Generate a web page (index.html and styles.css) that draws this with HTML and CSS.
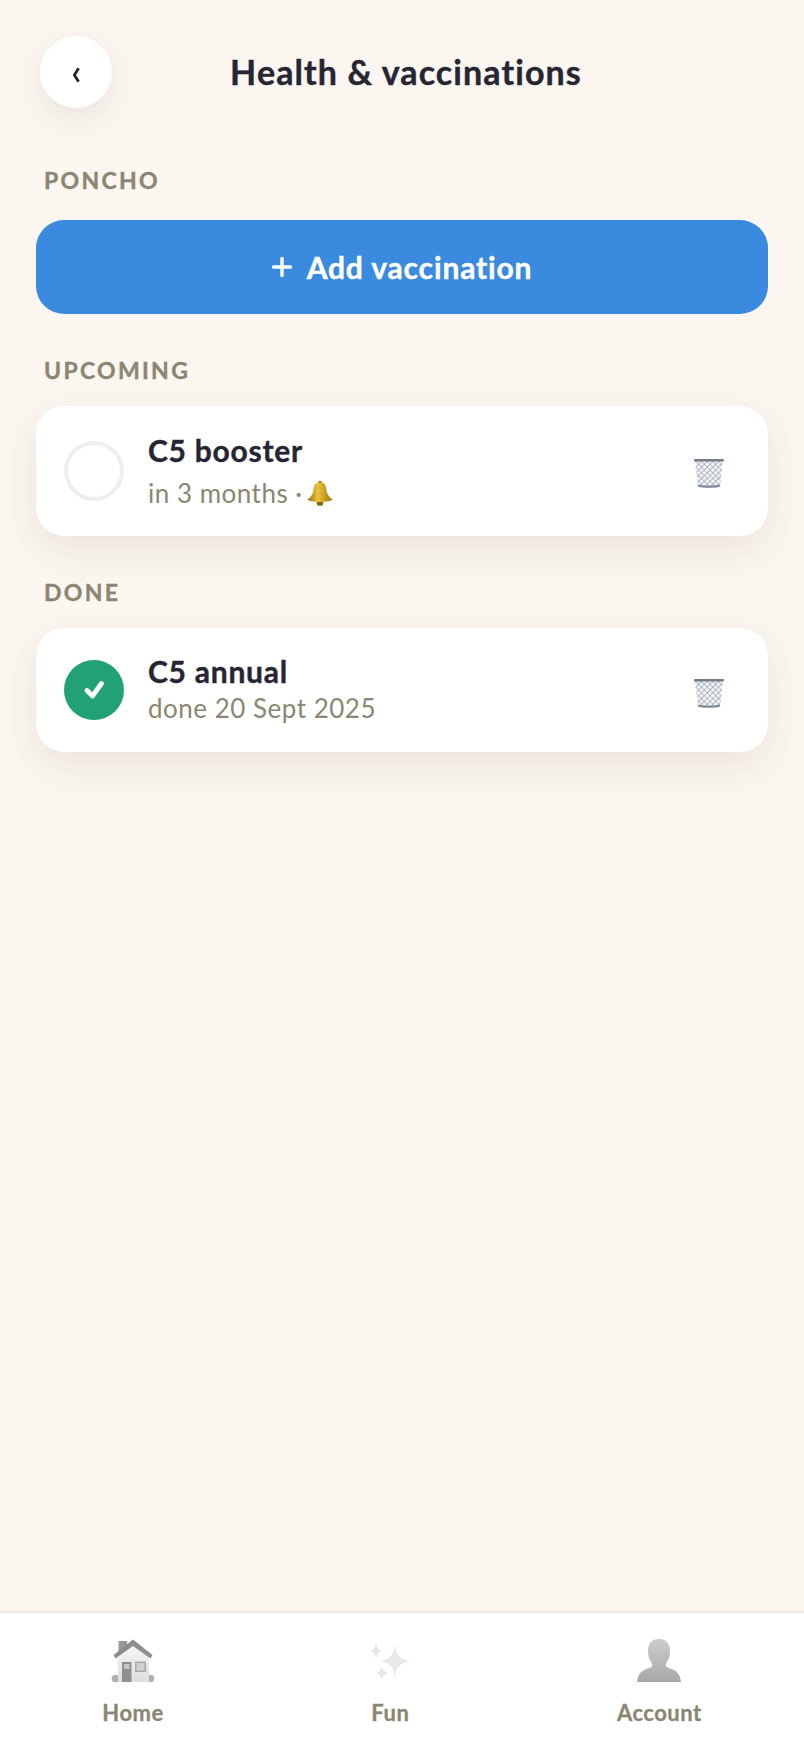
FILE: index.html
```html
<!DOCTYPE html>
<html lang="en">
<head>
<meta charset="utf-8">
<title>Health &amp; vaccinations</title>
<link rel="stylesheet" href="styles.css">
</head>
<body>
<div class="screen">
  <main class="content">
    <header class="header">
      <button class="back" aria-label="Back">
        <svg width="12" height="18" viewBox="0 0 12 18"><path d="M8.600 2.200 4.400 9l4.200 6.800" fill="none" stroke="#262633" stroke-width="2.800"/></svg>
      </button>
      <h1 class="title">Health &amp; vaccinations</h1>
    </header>
    <div class="label label-pet">PONCHO</div>
    <button class="add">
      <svg width="20" height="20" viewBox="0 0 20 20"><path d="M10 1.500v17M1.500 10h17" stroke="#fff" stroke-width="3.400" stroke-linecap="round"/></svg>
      <span>Add vaccination</span>
    </button>
    <div class="label label-up">UPCOMING</div>
    <section class="card card-up">
      <span class="circle"></span>
      <div class="info">
        <div class="name">C5 booster</div>
        <div class="sub sub-up">in 3 months · <svg class="bell" width="26" height="26" viewBox="0 0 28 28"><defs><linearGradient id="b" x1="0" x2="1"><stop offset="0" stop-color="#96690c"/><stop offset=".4" stop-color="#eec23a"/><stop offset="1" stop-color="#a5760c"/></linearGradient></defs><circle cx="14" cy="3" r="2.200" fill="#a5760c"/><ellipse cx="14" cy="25" rx="3.500" ry="2.800" fill="#8f630c"/><path d="M14 2.500c5 0 6.500 3.500 7 8.500 .5 4 3 7.500 6.500 10 0 1-6.500 2.800-13.500 2.800S.5 22 .5 21C4 18.500 6.500 15 7 11c.5-5 2-8.500 7-8.500z" fill="url(#b)"/></svg></div>
      </div>
      <svg class="trash" width="32" height="30" viewBox="0 0 32 30"><defs><pattern id="m" width="4" height="4" patternUnits="userSpaceOnUse" patternTransform="rotate(45)"><rect width="4" height="4" fill="#f2f4f6"/><path d="M0 0H4M0 0V4" stroke="#8a94a1" stroke-width="1.200"/></pattern></defs><path d="M2 3h28l-3 25.500c-3 1.500-19 1.500-22 0z" fill="url(#m)"/><rect x="1" y="1" width="30" height="2.600" rx="1" fill="#777d86"/><path d="M5 27.500c4 1.500 18 1.500 22 0" stroke="#7f8a98" stroke-width="2" fill="none"/></svg>
    </section>
    <div class="label label-done">DONE</div>
    <section class="card card-done">
      <span class="circle done">
        <svg width="24" height="22" viewBox="0 0 24 22"><path d="M5 11.500 10.500 17 19.500 4.500" fill="none" stroke="#fff" stroke-width="4.800" stroke-linecap="round" stroke-linejoin="round"/></svg>
      </span>
      <div class="info info-done">
        <div class="name">C5 annual</div>
        <div class="sub">done 20 Sept 2025</div>
      </div>
      <svg class="trash trash-done" width="32" height="30" viewBox="0 0 32 30"><path d="M2 3h28l-3 25.500c-3 1.500-19 1.500-22 0z" fill="url(#m)"/><rect x="1" y="1" width="30" height="2.600" rx="1" fill="#777d86"/><path d="M5 27.500c4 1.500 18 1.500 22 0" stroke="#7f8a98" stroke-width="2" fill="none"/></svg>
    </section>
  </main>
  <nav class="tabs">
    <div class="tab">
      <svg class="tab-icon" width="44" height="44" viewBox="0 0 44 44"><defs><linearGradient id="w" x1="0" x2="0" y1="0" y2="1"><stop offset="0" stop-color="#f6f6f6"/><stop offset="1" stop-color="#dedede"/></linearGradient></defs><rect x="7.500" y="2" width="8.500" height="13" fill="#999999"/><ellipse cx="4.500" cy="39.500" rx="3.800" ry="3.800" fill="#b0b0b0"/><ellipse cx="39.500" cy="39.500" rx="3.800" ry="3.800" fill="#b0b0b0"/><path d="M22 5 38 18v25H7V18z" fill="url(#w)"/><path d="M22 .5 41.500 16l-2 3.500L22 7 4.500 19.500l-2-3.500z" fill="#8e8e8e"/><rect x="11" y="23" width="9.500" height="20" fill="#8f8f8f"/><rect x="13" y="25" width="5.500" height="5" fill="#c5c5c5"/><rect x="24" y="22.500" width="11" height="10.500" fill="#a8a8a8"/><rect x="25.500" y="24" width="8" height="7.500" fill="#d0d0d0"/></svg>
      <span class="tab-label">Home</span>
    </div>
    <div class="tab">
      <svg class="tab-icon" width="44" height="44" viewBox="0 0 44 44"><path d="M27 4c.8 11 3 15.500 15 18-12 2.500-14.200 7-15 19-.8-12-3-16.500-15-19 12-2.500 14.200-7 15-18z" fill="#e9e9e9"/><path d="M8 3c.5 6 1.800 8 6.500 9C9.800 13 8.500 15 8 21c-.5-6-1.800-8-6.500-9C6.200 11 7.500 9 8 3z" fill="#e6e6e6"/><path d="M14 26c.5 5 1.800 7 6.500 8-4.700 1-6 3-6.500 8-.5-5-1.800-7-6.500-8 4.700-1 6-3 6.500-8z" fill="#e6e6e6"/></svg>
      <span class="tab-label">Fun</span>
    </div>
    <div class="tab">
      <svg class="tab-icon" width="44" height="44" viewBox="0 0 44 44"><defs><linearGradient id="p" x1="0" x2="0" y1="0" y2="1"><stop offset="0" stop-color="#cccccc"/><stop offset="1" stop-color="#a8a8a8"/></linearGradient></defs><path d="M22 0c7.500 0 11 4.500 11 12.500 0 5-2 9.500-4 12-1 2 0 3.500 3 4.500 6 2 11 4 12 14H0c1-10 6-12 12-14 3-1 4-2.500 3-4.500-2-2.500-4-7-4-12C11 4.500 14.500 0 22 0z" fill="url(#p)"/></svg>
      <span class="tab-label">Account</span>
    </div>
  </nav>
</div>
</body>
</html>
```
FILE: styles.css
```css
* { box-sizing: border-box; }
html, body { margin: 0; padding: 0; height: 100%; }
body { background: #fbf6f0; font-family: "Lato", "Noto Sans", sans-serif; color: #262633; }
.screen { width: 804px; height: 1748px; display: flex; flex-direction: column; }
.content { flex: 1; padding: 36px 36px 0; }
.header { display: flex; align-items: center; height: 72px; padding: 0 68px 0 4px; }
.back { width: 72px; height: 72px; border: 0; border-radius: 50%; background: #fff; padding: 5px 0 0; display: flex; align-items: center; justify-content: center; box-shadow: 0 10px 32px rgba(80, 60, 40, .09); }
.title { flex: 1; margin: 0; text-align: center; font-size: 34px; font-weight: 700; line-height: 44px; letter-spacing: 1.1px; -webkit-text-stroke: .4px #262633; }
.label { font-size: 23px; font-weight: 700; letter-spacing: 2.3px; color: #8b8672; line-height: 28px; padding-left: 8px; -webkit-text-stroke: .4px #8b8672; }
.label-pet { margin-top: 58px; }
.label-up { margin-top: 42px; }
.label-done { margin-top: 42px; }
.add { width: 100%; height: 94px; margin-top: 26px; border: 0; border-radius: 28px; background: #3a8ae0; color: #fff; font: 700 30px "Lato", sans-serif; letter-spacing: .85px; display: flex; align-items: center; justify-content: center; gap: 15px; -webkit-text-stroke: .4px #fff; }
.card { display: flex; align-items: center; background: #fff; border-radius: 28px; padding: 0 43px 0 28px; box-shadow: 0 14px 40px rgba(80, 60, 40, .09); }
.card-up { height: 130px; margin-top: 22px; }
.card-done { height: 124px; margin-top: 22px; }
.circle { width: 60px; height: 60px; border-radius: 50%; border: 4px solid #eeeeee; flex: none; display: flex; align-items: center; justify-content: center; }
.circle.done { background: #21a174; border: 0; }
.info { flex: 1; margin-left: 24px; }
.info-done { margin-top: -2px; }
.name { font-size: 30px; font-weight: 700; line-height: 38px; letter-spacing: .75px; -webkit-text-stroke: .4px #262633; }
.sub { font-size: 26px; color: #8b8672; line-height: 36px; letter-spacing: .5px; }
.sub-up { margin-top: 6px; display: flex; align-items: center; gap: 4px; }
.bell { flex: none; }
.trash { flex: none; margin-top: 4px; }
.trash-done { margin-top: 6px; }
.tabs { height: 137px; flex: none; background: #fff; border-top: 2px solid #eeeae6; display: flex; justify-content: space-around; padding-top: 26px; }
.tab { display: flex; flex-direction: column; align-items: center; }
.tab-icon { display: block; }
.tab-label { margin-top: 15px; font-size: 22px; font-weight: 700; color: #8b8672; line-height: 30px; letter-spacing: .5px; -webkit-text-stroke: .3px #8b8672; }
```
